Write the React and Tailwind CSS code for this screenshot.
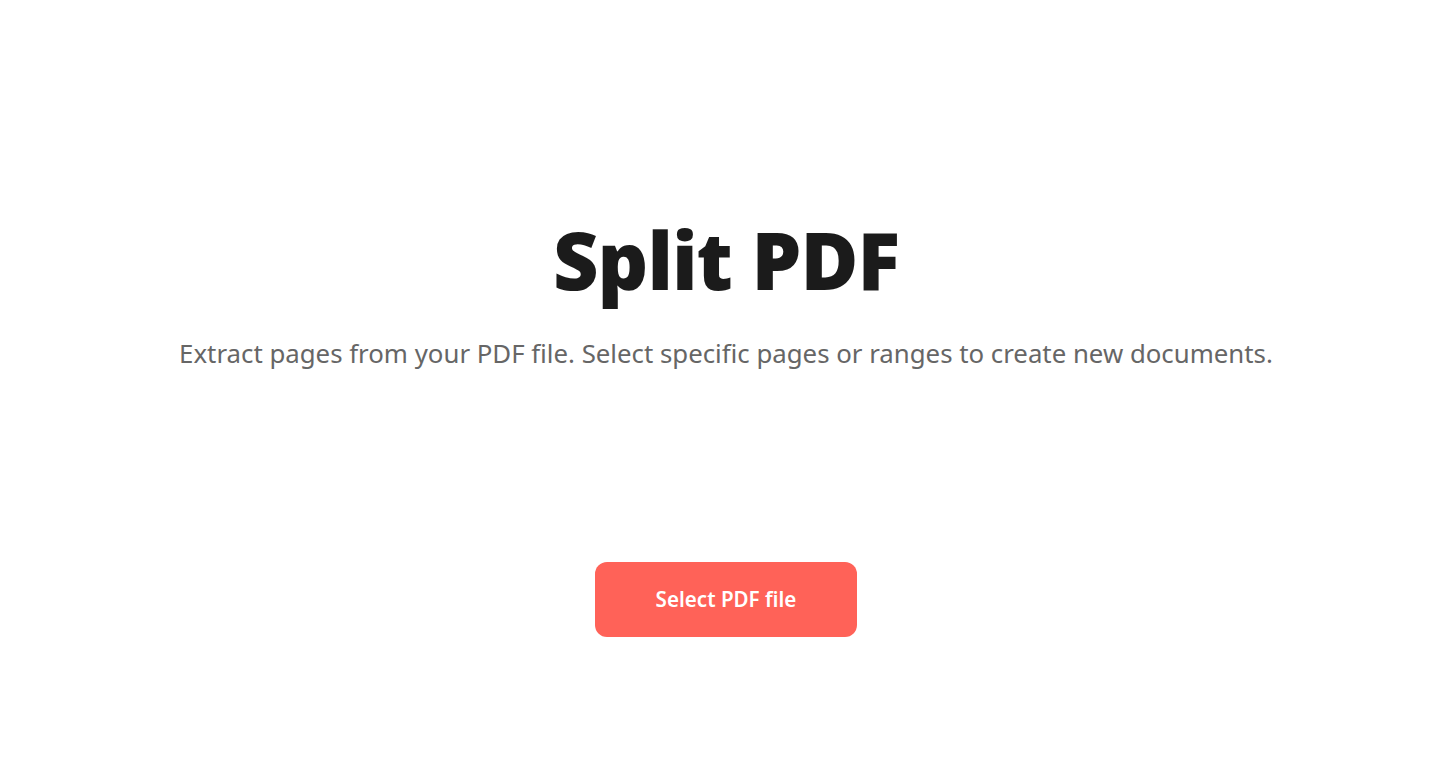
import React from 'react';

export default function App() {
  return (
    <div className="min-h-screen bg-white flex flex-col items-center font-['Segoe_UI','Noto_Sans',sans-serif]">
      <div className="pt-[214px] flex flex-col items-center">
        <h1 className="text-[79px] leading-[92px] font-black tracking-[-1px] text-[#1b1b1b]">Split PDF</h1>
        <p className="mt-[31px] text-[25.8px] leading-[32px] text-[#666666]">
          Extract pages from your PDF file. Select specific pages or ranges to create new documents.
        </p>
      </div>
      <button className="mt-[193px] w-[262px] h-[75px] rounded-[12px] bg-[#ff6258] text-white text-[20.6px] font-semibold">
        Select PDF file
      </button>
    </div>
  );
}
